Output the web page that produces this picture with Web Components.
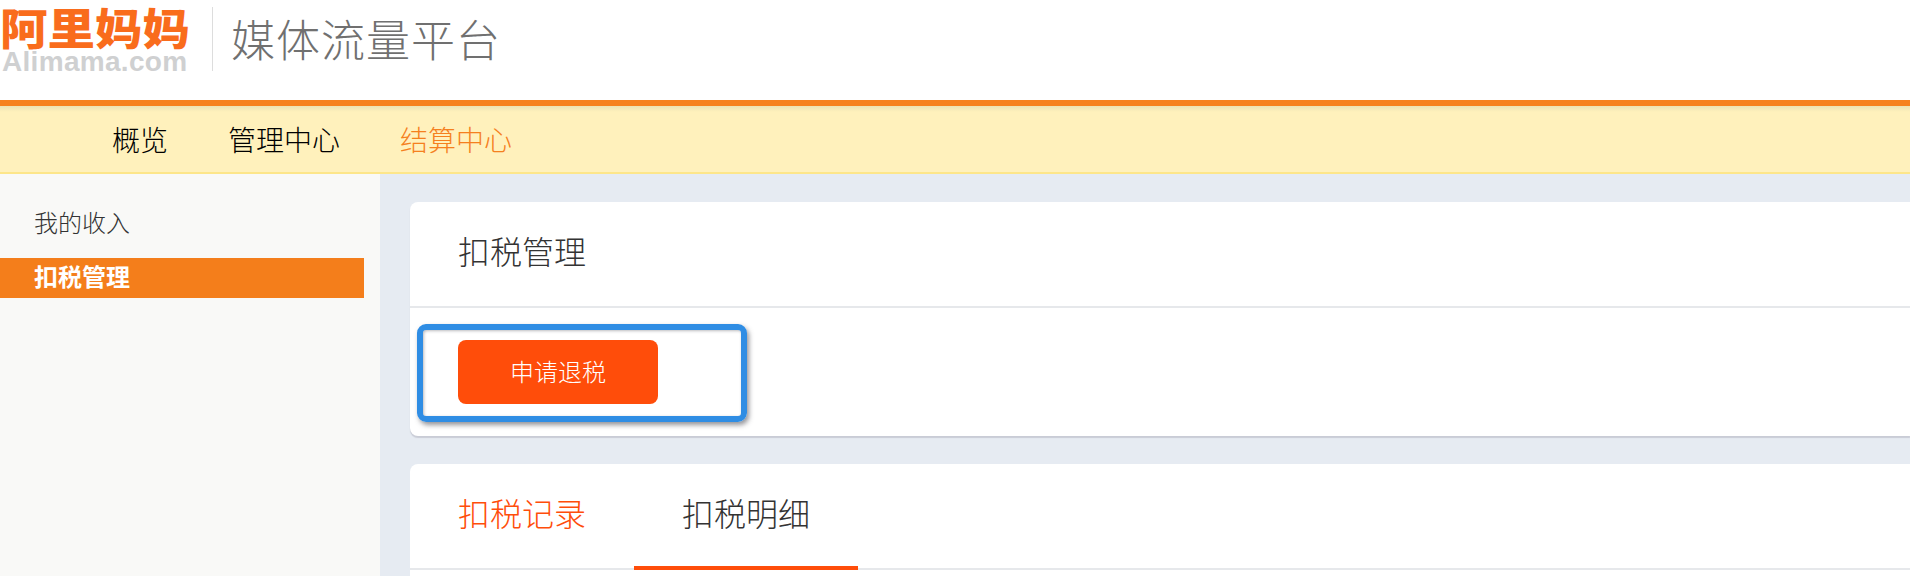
<!DOCTYPE html>
<html lang="zh">
<head>
<meta charset="utf-8">
<title>媒体流量平台</title>
<style>
  html, body { margin: 0; height: 576px; overflow: hidden; background: #e6ebf2; }
  body { font-family: "Noto Sans CJK SC", "Liberation Sans", sans-serif; color: #333; }
  .layout { display: grid; grid-template-columns: 380px 1fr; height: 402px; }
</style>
</head>
<body>
<site-header></site-header>
<top-nav>
  <nav-link>概览</nav-link>
  <nav-link>管理中心</nav-link>
  <nav-link active>结算中心</nav-link>
</top-nav>
<div class="layout">
  <side-menu>
    <menu-item>我的收入</menu-item>
    <menu-item active>扣税管理</menu-item>
  </side-menu>
  <page-main>
    <title-card heading="扣税管理">
      <apply-button>申请退税</apply-button>
    </title-card>
    <tab-card>
      <tab-item selected>扣税记录</tab-item>
      <tab-item underlined>扣税明细</tab-item>
    </tab-card>
  </page-main>
</div>

<script>
const make = (html) => {
  const template = document.createElement("template");
  template.innerHTML = html;
  return template;
};

const headerTemplate = make(`
<style>
  :host { display: flex; align-items: flex-start; height: 100px; background: #fff; }
  .logo { width: 193px; display: flex; flex-direction: column; padding-top: 5px; }
  .cn {
    font: 900 47.5px/44px "Noto Sans CJK SC", sans-serif;
    color: #f96c1c;
    white-space: nowrap;
    height: 44px;
    transform: scaleY(.9);
    transform-origin: 50% 50%;
  }
  .en {
    font: 700 28px/24px "Liberation Sans", sans-serif;
    color: #cfd0d1;
    letter-spacing: .3px;
    margin: 1px 0 0 2px;
    white-space: nowrap;
  }
  .rule { width: 1px; height: 64px; background: #ddd; margin: 7px 0 0 19px; }
  .name {
    font: 300 44px/50px "Noto Sans CJK SC", sans-serif;
    color: #707070;
    letter-spacing: 1px;
    margin: 13px 0 0 18px;
    white-space: nowrap;
  }
</style>
<div class="logo">
  <div class="cn">阿里妈妈</div>
  <div class="en">Alimama.com</div>
</div>
<div class="rule"></div>
<div class="name">媒体流量平台</div>
`);

class SiteHeader extends HTMLElement {
  constructor() {
    super();
    this.attachShadow({ mode: "open" });
    this.shadowRoot.appendChild(headerTemplate.content.cloneNode(true));
  }
}

const navTemplate = make(`
<style>
  :host {
    display: flex;
    gap: 60px;
    height: 66px;
    padding-left: 112px;
    align-items: center;
    background: linear-gradient(#ece3b4, #fff1bc 6px);
    border-top: 6px solid #f6821f;
    border-bottom: 2px solid #fde68a;
  }
</style>
<slot></slot>
`);

class TopNav extends HTMLElement {
  constructor() {
    super();
    this.attachShadow({ mode: "open" });
    this.shadowRoot.appendChild(navTemplate.content.cloneNode(true));
  }
}

const navLinkTemplate = make(`
<style>
  :host { display: block; font-size: 28px; font-weight: 300; line-height: 38px; color: #000; white-space: nowrap; }
  :host([active]) { color: #f5801e; }
</style>
<slot></slot>
`);

class NavLink extends HTMLElement {
  constructor() {
    super();
    this.attachShadow({ mode: "open" });
    this.shadowRoot.appendChild(navLinkTemplate.content.cloneNode(true));
  }
}

const menuTemplate = make(`
<style>
  :host { display: block; background: #f9f9f7; padding: 30px 16px 0 0; }
</style>
<slot></slot>
`);

class SideMenu extends HTMLElement {
  constructor() {
    super();
    this.attachShadow({ mode: "open" });
    this.shadowRoot.appendChild(menuTemplate.content.cloneNode(true));
  }
}

const menuItemTemplate = make(`
<style>
  :host {
    display: block;
    height: 40px;
    line-height: 36px;
    padding-left: 34px;
    margin-bottom: 14px;
    font-size: 24px;
    font-weight: 300;
    color: #333;
  }
  :host([active]) { background: #f47e1b; color: #fff; font-weight: 700; }
</style>
<slot></slot>
`);

class MenuItem extends HTMLElement {
  constructor() {
    super();
    this.attachShadow({ mode: "open" });
    this.shadowRoot.appendChild(menuItemTemplate.content.cloneNode(true));
  }
}

const mainTemplate = make(`
<style>
  :host { display: flex; flex-direction: column; gap: 28px; padding: 28px 0 0 30px; background: #e6ebf2; min-width: 0; }
</style>
<slot></slot>
`);

class PageMain extends HTMLElement {
  constructor() {
    super();
    this.attachShadow({ mode: "open" });
    this.shadowRoot.appendChild(mainTemplate.content.cloneNode(true));
  }
}

const titleCardTemplate = make(`
<style>
  :host {
    display: block;
    background: #fff;
    border-radius: 8px 0 0 8px;
    box-shadow: 0 2px 1px #c9ccd6;
  }
  h2 {
    margin: 0;
    height: 104px;
    line-height: 96px;
    padding-left: 48px;
    font-size: 32px;
    font-weight: 300;
    color: #333;
    border-bottom: 2px solid #e6e8eb;
  }
  .body { position: relative; height: 128px; padding: 32px 0 0 48px; box-sizing: border-box; }
  .mark {
    position: absolute;
    left: 7px;
    top: 16px;
    width: 330px;
    height: 98px;
    box-sizing: border-box;
    border: 6px solid #2f8de4;
    border-radius: 9px;
    box-shadow: 2px 3px 5px rgba(60, 60, 70, .55), inset 1px 1px 3px rgba(60, 60, 70, .35);
  }
</style>
<h2></h2>
<div class="body">
  <slot></slot>
  <div class="mark"></div>
</div>
`);

class TitleCard extends HTMLElement {
  constructor() {
    super();
    this.attachShadow({ mode: "open" });
    this.shadowRoot.appendChild(titleCardTemplate.content.cloneNode(true));
    this.shadowRoot.querySelector("h2").innerText = this.getAttribute("heading");
  }
}

const buttonTemplate = make(`
<style>
  :host {
    display: block;
    width: 200px;
    height: 64px;
    line-height: 62px;
    text-align: center;
    border-radius: 8px;
    background: #ff4d0a;
    color: #fff;
    font-size: 24px;
    font-weight: 300;
  }
</style>
<slot></slot>
`);

class ApplyButton extends HTMLElement {
  constructor() {
    super();
    this.attachShadow({ mode: "open" });
    this.shadowRoot.appendChild(buttonTemplate.content.cloneNode(true));
  }
}

const tabCardTemplate = make(`
<style>
  :host { display: block; flex: 1; background: #fff; border-radius: 8px 0 0 0; }
  .row { display: flex; height: 104px; border-bottom: 2px solid #e6e8eb; }
</style>
<div class="row"><slot></slot></div>
`);

class TabCard extends HTMLElement {
  constructor() {
    super();
    this.attachShadow({ mode: "open" });
    this.shadowRoot.appendChild(tabCardTemplate.content.cloneNode(true));
  }
}

const tabItemTemplate = make(`
<style>
  :host {
    display: block;
    box-sizing: border-box;
    width: 224px;
    height: 106px;
    padding: 0 48px;
    line-height: 96px;
    font-size: 32px;
    font-weight: 300;
    color: #333;
    white-space: nowrap;
  }
  :host([selected]) { color: #ff4d0a; }
  :host([underlined]) { border-bottom: 4px solid #ff4d0a; }
</style>
<slot></slot>
`);

class TabItem extends HTMLElement {
  constructor() {
    super();
    this.attachShadow({ mode: "open" });
    this.shadowRoot.appendChild(tabItemTemplate.content.cloneNode(true));
  }
}

customElements.define("site-header", SiteHeader);
customElements.define("top-nav", TopNav);
customElements.define("nav-link", NavLink);
customElements.define("side-menu", SideMenu);
customElements.define("menu-item", MenuItem);
customElements.define("page-main", PageMain);
customElements.define("title-card", TitleCard);
customElements.define("apply-button", ApplyButton);
customElements.define("tab-card", TabCard);
customElements.define("tab-item", TabItem);
</script>
</body>
</html>
